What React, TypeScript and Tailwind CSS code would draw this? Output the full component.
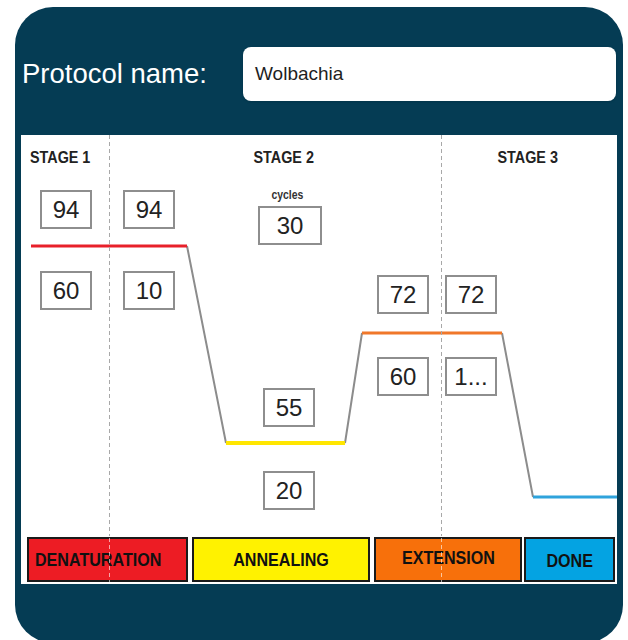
import React from 'react';

interface ValueBox {
    label: string;
    x: number;
    y: number;
    w?: number;
}

const boxes: ValueBox[] = [
    { label: '94', x: 19, y: 55 },
    { label: '94', x: 102, y: 55 },
    { label: '30', x: 237, y: 71, w: 64 },
    { label: '60', x: 19, y: 136 },
    { label: '10', x: 102, y: 136 },
    { label: '55', x: 242, y: 253 },
    { label: '20', x: 242, y: 336 },
    { label: '72', x: 356, y: 140 },
    { label: '72', x: 424, y: 140 },
    { label: '60', x: 356, y: 222 },
    { label: '1...', x: 424, y: 222 },
];

const font = { fontFamily: '"Liberation Sans", Arial, sans-serif' };

const Narrow: React.FC<{ children: React.ReactNode; className?: string }> = ({ children, className }) => (
    <span className={`inline-block scale-x-[0.87] whitespace-nowrap font-bold ${className ?? 'origin-center'}`}>{children}</span>
);

const TempBox = ({ box }: { box: ValueBox }) => (
    <div
        className="absolute flex h-[39px] items-center justify-center border-2 border-[#8e8e8e] bg-white text-[24px] leading-none text-[#222]"
        style={{ left: box.x, top: box.y, width: box.w ?? 52 }}
    >
        {box.label}
    </div>
);

export default function App() {
    return (
        <div className="h-[640px] w-[628px] overflow-hidden bg-white" style={font}>
            <div className="ml-[15px] mt-[7px] flex h-[636px] w-[608px] flex-col rounded-[38px] bg-[#053c54] px-[6px] pt-[40px]">
                <header className="flex items-center pr-[1px]">
                    <div className="flex-1 pl-[1px] text-[27.5px] leading-none text-white">Protocol name:</div>
                    <div className="flex h-[54px] w-[373px] items-center rounded-[8px] bg-white pl-[12px] text-[19px] text-[#1f1f1f] shadow-sm">
                        Wolbachia
                    </div>
                </header>

                <section className="relative mt-[34px] flex h-[449px] flex-col justify-end bg-white pb-[2px]">
                    {/* stage headings */}
                    <div className="absolute left-[9px] top-[14px] text-[16.5px] leading-none text-[#222]">
                        <Narrow className="origin-left">STAGE 1</Narrow>
                    </div>
                    <div className="absolute left-[213px] top-[14px] w-[100px] text-center text-[16.5px] leading-none text-[#222]">
                        <Narrow>STAGE 2</Narrow>
                    </div>
                    <div className="absolute left-[457px] top-[14px] w-[100px] text-center text-[16.5px] leading-none text-[#222]">
                        <Narrow>STAGE 3</Narrow>
                    </div>
                    <div className="absolute left-[229px] top-[54px] w-[74px] text-center text-[12px] leading-none text-[#333]">
                        <Narrow>cycles</Narrow>
                    </div>

                    {/* temperature profile */}
                    <svg className="absolute left-0 top-0" width="596" height="449" viewBox="0 0 596 449">
                        <path d="M166 111 L205 308 M324 308 L341 198 M481 198 L512 362" stroke="#8c8c8c" strokeWidth="2" fill="none" />
                        <line x1="10" y1="111" x2="166" y2="111" stroke="#e8202a" strokeWidth="3" />
                        <line x1="205" y1="308" x2="324" y2="308" stroke="#ffe600" strokeWidth="4" />
                        <line x1="341" y1="198" x2="481" y2="198" stroke="#f0772a" strokeWidth="3" />
                        <line x1="512" y1="362" x2="596" y2="362" stroke="#2fa3dc" strokeWidth="3" />
                    </svg>

                    {boxes.map((b, i) => (
                        <TempBox key={i} box={b} />
                    ))}

                    {/* step legend */}
                    <div className="flex h-[45px] pl-[6px] text-[18.5px] leading-none text-[#111]">
                        <div className="flex w-[161px] items-center border-2 border-[#1a1a1a] bg-[#ed1c24] pl-[6px] pt-[1px]">
                            <Narrow className="origin-left">DENATURATION</Narrow>
                        </div>
                        <div className="ml-[4px] flex w-[178px] items-center justify-center border-2 border-[#1a1a1a] bg-[#fff200] pt-[2px]">
                            <Narrow>ANNEALING</Narrow>
                        </div>
                        <div className="ml-[4px] flex w-[148px] items-center justify-center border-2 border-[#1a1a1a] bg-[#f7700b] pb-[3px]">
                            <Narrow>EXTENSION</Narrow>
                        </div>
                        <div className="ml-[2px] flex w-[91px] items-center justify-center border-2 border-[#1a1a1a] bg-[#04a3e2] pt-[4px]">
                            <Narrow>DONE</Narrow>
                        </div>
                    </div>

                    {/* stage dividers */}
                    <svg className="pointer-events-none absolute left-0 top-0" width="596" height="449" viewBox="0 0 596 449">
                        <g strokeWidth="1" strokeDasharray="4 3">
                            <line x1="88.5" y1="0" x2="88.5" y2="401" stroke="#a8a8a8" />
                            <line x1="420.5" y1="0" x2="420.5" y2="401" stroke="#a8a8a8" />
                            <line x1="88.5" y1="403" x2="88.5" y2="447" stroke="#ffffff" strokeOpacity="0.6" />
                            <line x1="420.5" y1="403" x2="420.5" y2="447" stroke="#ffffff" strokeOpacity="0.6" />
                        </g>
                    </svg>
                </section>
            </div>
        </div>
    );
}
